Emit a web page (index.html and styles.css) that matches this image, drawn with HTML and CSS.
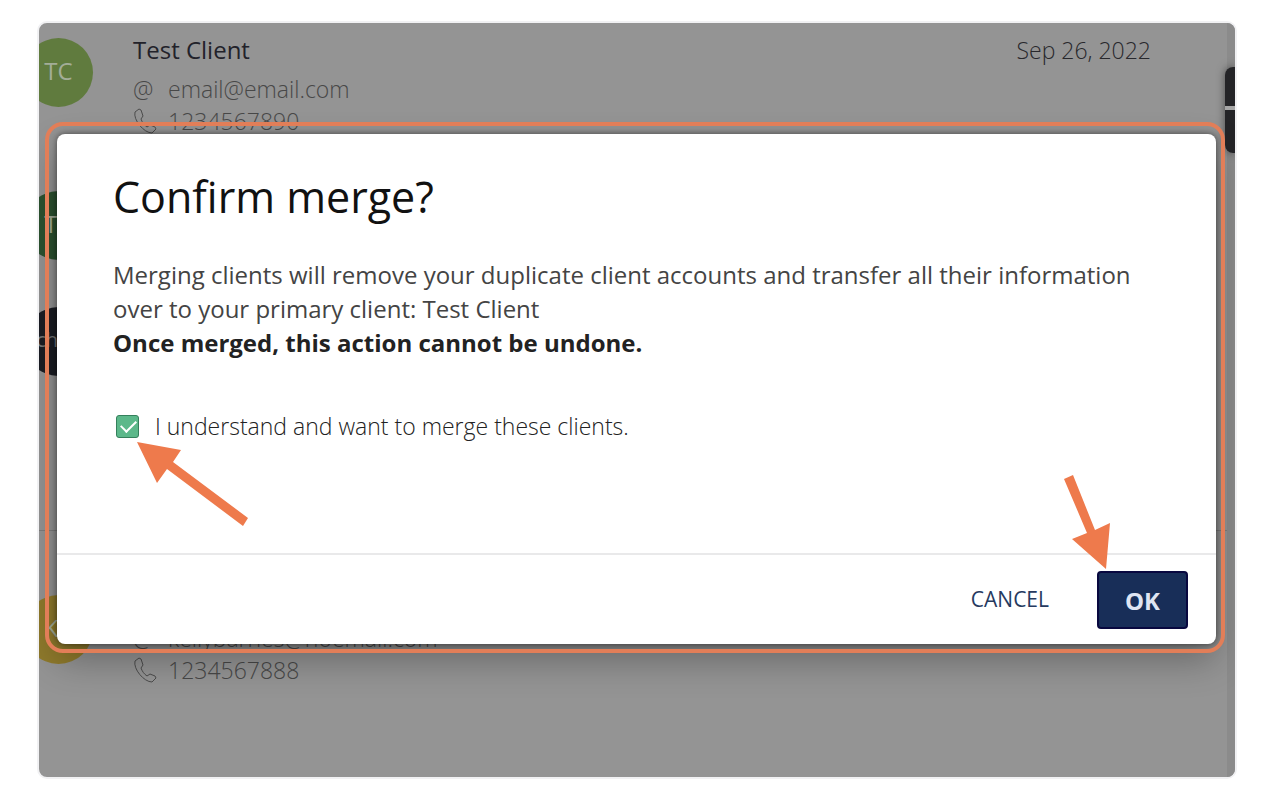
FILE: index.html
```html
<!DOCTYPE html>
<html lang="en">
<head>
    <meta charset="UTF-8">
    <title>Confirm merge</title>
    <link rel="stylesheet" href="styles.css">
</head>
<body>
    <div class="frame">
        <div class="clients">
            <div class="client">
                <div class="avatar">TC</div>
                <div class="info">
                    <div class="name">Test Client</div>
                    <div class="line"><span class="icon">@</span>email@email.com</div>
                    <div class="line">
                        <span class="icon"><svg width="24" height="26" viewBox="0 0 24 26"><path d="M6 1 L2 4 C0 12 11 25 19 25 L23 21 L22 19 L17 17 L14 19 C11 17 9 14 8 11 L10 8 L8 2 Z"/></svg></span>1234567890
                    </div>
                </div>
                <div class="date">Sep 26, 2022</div>
            </div>
            <div class="client short">
                <div class="avatar green">TC</div>
            </div>
            <div class="client tall">
                <div class="avatar black">chris</div>
            </div>
            <div class="client last">
                <div class="avatar gold">KB</div>
                <div class="info">
                    <div class="name">Kelly Barnes</div>
                    <div class="line"><span class="icon">@</span>kellybarnes@noemail.com</div>
                    <div class="line">
                        <span class="icon"><svg width="24" height="26" viewBox="0 0 24 26"><path d="M6 1 L2 4 C0 12 11 25 19 25 L23 21 L22 19 L17 17 L14 19 C11 17 9 14 8 11 L10 8 L8 2 Z"/></svg></span>1234567888
                    </div>
                </div>
            </div>
        </div>
        <div class="scrollbar"></div>
        <div class="widget"></div>

        <div class="modal" role="dialog" aria-labelledby="title">
            <div class="modal_body">
                <h1 id="title">Confirm merge?</h1>
                <p>Merging clients will remove your duplicate client accounts and transfer all their information over to your primary client: Test Client<br><strong>Once merged, this action cannot be undone.</strong></p>
                <div class="check">
                    <input type="checkbox" id="agree" checked>
                    <label for="agree">I understand and want to merge these clients.</label>
                    <svg class="arrow arrow_check" width="112" height="85" viewBox="0 0 112 85"><path d="M0 0 L44 8 L36 20 L111 76 L106 84 L30 27 L20 41 Z"/></svg>
                </div>
            </div>
            <div class="modal_footer">
                <button class="cancel" type="button">CANCEL</button>
                <div class="ok_wrap">
                    <button class="ok" type="button">OK</button>
                    <svg class="arrow arrow_ok" width="46" height="94" viewBox="0 0 46 94"><path d="M42 94 L46 48 L31 55 L9 0 L0 4 L23 58 L8 64 Z"/></svg>
                </div>
            </div>
        </div>
    </div>
</body>
</html>
```
FILE: styles.css
```css
* {
    box-sizing: border-box;
}
body {
    display: flex;
    margin: 0;
    padding: 21px 31px 15px 37px;
    min-height: 100vh;
    background-color: #ffffff;
    font-family: "Open Sans", "Noto Sans", sans-serif;
}
.frame {
    position: relative;
    flex: 1;
    overflow: hidden;
    border: 2px solid #f1f1f3;
    border-radius: 10px;
    background-color: #949494;
}

/* client list, dimmed behind the dialog */
.client {
    display: flex;
    height: 153px;
    padding: 8px 84px 0 0;
}
.short {
    height: 116px;
}
.tall {
    height: 239px;
    border-bottom: 1px solid #7d7d7d;
}
.last {
    padding-top: 49px;
    height: auto;
}
.avatar {
    flex: none;
    width: 69px;
    height: 69px;
    margin-left: -15px;
    margin-top: 7px;
    border-radius: 50%;
    background-color: #607b3e;
    color: #a3ad98;
    font-size: 24px;
    line-height: 66px;
    text-align: center;
}
.green {
    background-color: #2c5230;
}
.black {
    background-color: #1b1d24;
    color: #777777;
    font-size: 20px;
}
.gold {
    margin-top: 15px;
    background-color: #8f7a2c;
}
.info {
    flex: 1;
    margin-left: 40px;
}
.name {
    color: #22222a;
    font-size: 24px;
    line-height: 38px;
    margin-bottom: 4px;
}
.line {
    display: flex;
    align-items: center;
    height: 32px;
    color: #484848;
    font-size: 23px;
    font-weight: 300;
}
.icon {
    display: flex;
    width: 35px;
}
.icon svg {
    fill: none;
    stroke: #4c4c4c;
    stroke-width: 1;
    stroke-linejoin: round;
}
.date {
    color: #28282c;
    font-size: 23px;
    font-weight: 300;
    line-height: 38px;
}
.scrollbar {
    position: absolute;
    top: 0;
    right: 0;
    bottom: 0;
    width: 8px;
    background-color: #8b8b8b;
}
.widget {
    position: absolute;
    top: 44px;
    right: 0;
    width: 10px;
    height: 86px;
    border-radius: 8px 0 0 8px;
    background: linear-gradient(#242427 39px, #a6a6a6 39px, #a6a6a6 43px, #242427 43px);
    box-shadow: 0 0 8px rgba(0, 0, 0, .5);
}

/* dialog */
.modal {
    position: absolute;
    top: 111px;
    left: 18px;
    right: 19px;
    border-radius: 8px;
    background-color: #ffffff;
    box-shadow: 0 0 6px rgba(0, 0, 0, .5), 0 16px 36px rgba(0, 0, 0, .3);
}
.modal::after {
    content: "";
    position: absolute;
    inset: -12px -9px -9px -12px;
    border: 4px solid #e27e58;
    border-radius: 18px;
    pointer-events: none;
}
.modal_body {
    height: 419px;
    padding: 35px 56px 0;
}
h1 {
    margin: 0 0 33px;
    color: #111111;
    font-size: 43px;
    font-weight: 400;
    line-height: 56px;
}
p {
    margin: 0;
    color: #444444;
    font-size: 24px;
    line-height: 34px;
}
strong {
    color: #222222;
    font-weight: 700;
}
.check {
    position: relative;
    display: flex;
    align-items: center;
    gap: 16px;
    margin-top: 48px;
    padding-left: 3px;
    color: #222222;
    font-size: 23px;
    font-weight: 300;
    line-height: 36px;
}
.check input {
    appearance: none;
    width: 23px;
    height: 23px;
    margin: 0;
    border: 1px solid #35805c;
    border-radius: 3px;
    background-color: #5cb88a;
}
.check input:checked::before {
    content: "";
    display: block;
    width: 7px;
    height: 13px;
    margin: 1px 0 0 7px;
    border: solid #ffffff;
    border-width: 0 2px 2px 0;
    transform: rotate(45deg);
}
.arrow {
    position: absolute;
    fill: #ee7a4c;
}
.arrow_check {
    top: 34px;
    left: 24px;
}
.arrow_ok {
    right: 78px;
    bottom: 60px;
}
.modal_footer {
    display: flex;
    justify-content: flex-end;
    align-items: center;
    gap: 32px;
    padding: 16px 28px 15px;
    border-top: 2px solid #e9e9ea;
}
.cancel {
    padding: 8px 16px 10px;
    border: none;
    background: none;
    color: #263a5f;
    font: 400 21px "Open Sans", sans-serif;
}
.ok_wrap {
    position: relative;
}
.ok {
    display: block;
    width: 91px;
    height: 58px;
    border: 2px solid #08083f;
    border-radius: 4px;
    background-color: #182e58;
    color: #dfe5f2;
    font: 700 24px "Open Sans", sans-serif;
}
```
